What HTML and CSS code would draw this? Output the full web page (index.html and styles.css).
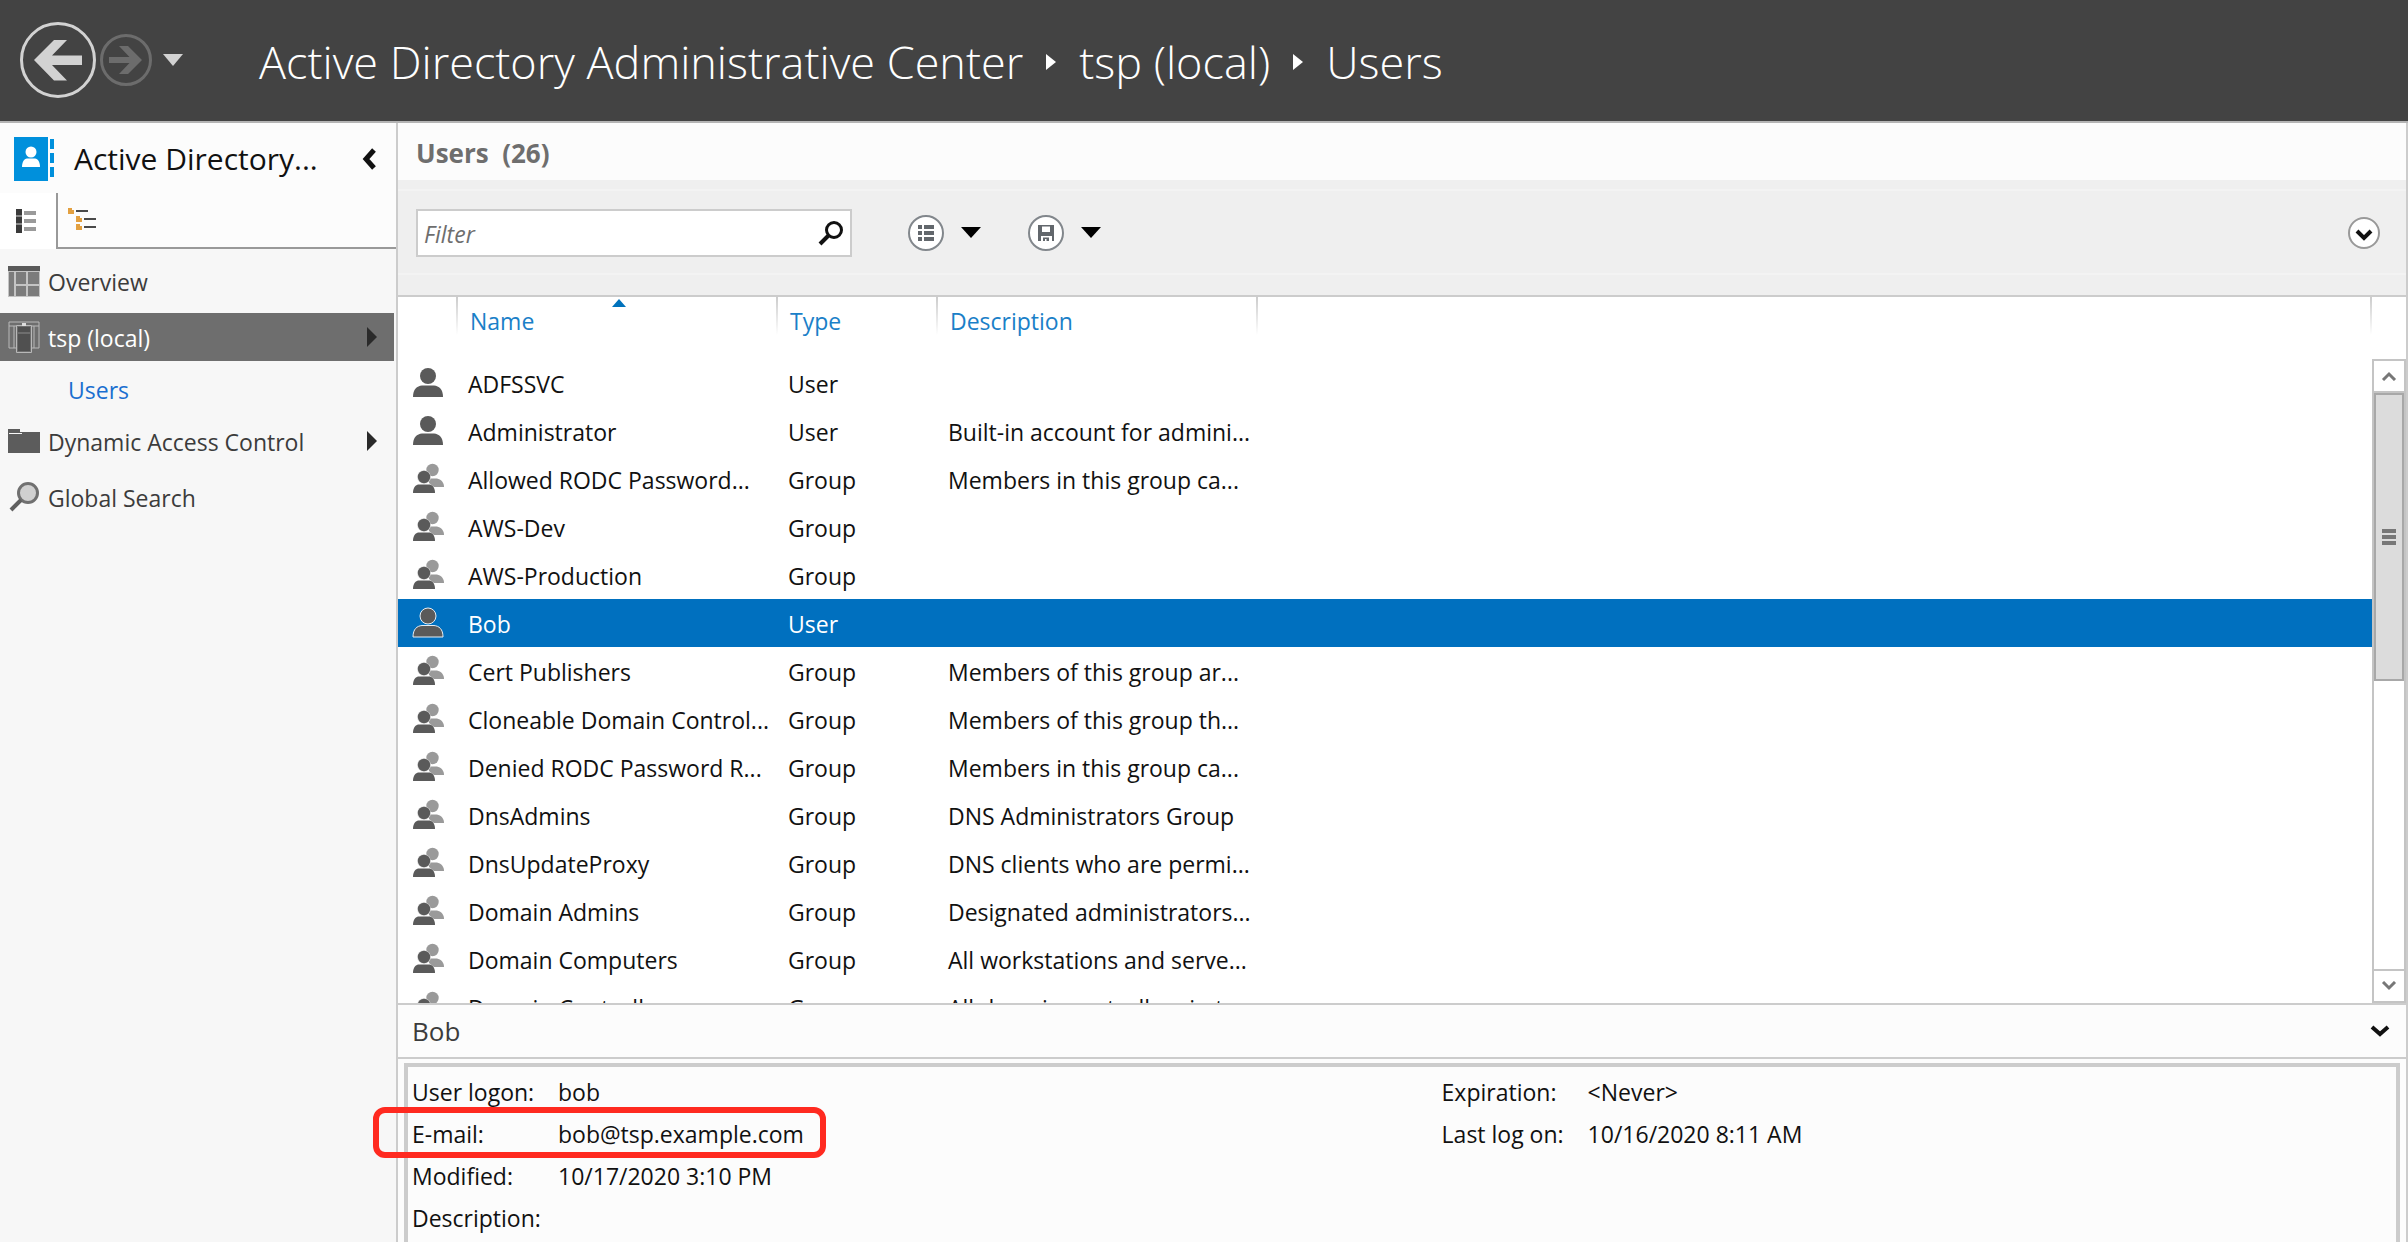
FILE: index.html
```html
<!DOCTYPE html>
<html lang="en">
<head>
<meta charset="utf-8">
<title>Active Directory Administrative Center</title>
<link rel="stylesheet" href="styles.css">
</head>
<body>
<svg class="sprite" aria-hidden="true">
  <symbol id="user" viewBox="0 0 32 32">
    <ellipse cx="16" cy="9" rx="8" ry="8"/>
    <path d="M1 30C1 22 5 19 10 18.500H22C27 19 31 22 31 30Z"/>
  </symbol>
  <symbol id="group" viewBox="0 0 32 32">
    <g fill="#9a9a9a"><circle cx="20.500" cy="7" r="6.200"/><path d="M17 15.500H25C29 16.500 32 19 32 24H22L17 20Z"/></g>
    <circle cx="12" cy="14" r="6.800" fill="#d8d8d8"/>
    <circle cx="12" cy="14" r="6.200"/>
    <path d="M1 30C1 25 3 22.500 6 21.500H18C21 22.500 23 25 23 30Z"/>
  </symbol>
</svg>

<header class="topbar">
  <button class="nav-btn" aria-label="Back">
    <svg width="76" height="76" viewBox="0 0 76 76"><circle cx="38" cy="38" r="36.500" fill="none" stroke="#d2d2d2" stroke-width="3"/><path d="M14 38L34 18H47L32 33.500H62V43H32L47 58.500H34Z" fill="#d2d2d2"/></svg>
  </button>
  <button class="nav-btn forward" aria-label="Forward" disabled>
    <svg width="52" height="52" viewBox="0 0 52 52"><circle cx="26" cy="26" r="24.500" fill="none" stroke="#6c6c6c" stroke-width="3"/><path d="M42 26L28 12H19L29.500 23H9V29H29.500L19 40H28Z" fill="#6c6c6c"/></svg>
  </button>
  <button class="nav-btn history" aria-label="History">
    <svg width="22" height="14" viewBox="0 0 22 14"><path d="M1 1H21L11 13Z" fill="#d2d2d2"/></svg>
  </button>
  <nav class="crumbs" aria-label="Breadcrumb">
    <a href="#">Active Directory Administrative Center</a>
    <svg width="10" height="16" viewBox="0 0 10 16"><path d="M0 0L10 8L0 16Z" fill="#fff"/></svg>
    <a href="#">tsp (local)</a>
    <svg width="10" height="16" viewBox="0 0 10 16"><path d="M0 0L10 8L0 16Z" fill="#fff"/></svg>
    <a href="#">Users</a>
  </nav>
</header>

<div class="body">
  <aside class="sidebar">
    <div class="side-head">
      <svg width="40" height="44" viewBox="0 0 40 44"><path fill="#0090dc" d="M0 0H34V44H0ZM36 2h4V12h-4ZM36 16h4V26h-4ZM36 30h4V40h-4Z"/><g fill="#fff"><circle cx="17" cy="15" r="5.500"/><path d="M8 30C8 25 10 22 13 21.500H21C24 22 26 25 26 30Z"/></g></svg>
      <h2>Active Directory...</h2>
      <button aria-label="Collapse pane"><svg width="14" height="22" viewBox="0 0 14 22"><path d="M12 2L4 11L12 20" fill="none" stroke="#111" stroke-width="5"/></svg></button>
    </div>
    <div class="tabs">
      <button class="tab active" aria-label="List view">
        <svg width="20" height="24" viewBox="0 0 20 24"><path fill="#3a3a3a" d="M0 0h6v24H0Z"/><path fill="#9a9a9a" d="M8 2h12v4H8ZM8 10h12v4H8ZM8 18h12v4H8Z"/><path fill="#8a8a8a" d="M0 6h6v2H0ZM0 14h6v2H0Z"/></svg>
      </button>
      <button class="tab" aria-label="Tree view">
        <svg width="28" height="24" viewBox="0 0 28 24"><path fill="#e3a040" d="M0 0h4v2h2v4H0ZM8 8h4v2h2v4H8ZM8 16h4v2h2v4H8Z"/><path fill="#4a4a4a" d="M8 2h12v2H8ZM16 10h12v2H16ZM16 18h12v2H16Z"/></svg>
      </button>
    </div>
    <nav class="tree" aria-label="Navigation">
      <a href="#" class="item">
        <svg width="32" height="32" viewBox="0 0 32 32"><path fill="#5a5a5a" d="M0 1h32v5H0Z"/><path fill="#c4c4c4" d="M0 6h32v26H0Z"/><path fill="#7c7c7c" d="M1 7h5v24H1ZM8 7h10v12H8ZM20 7h11v12H20ZM8 21h10v10H8ZM20 21h11v10H20Z"/></svg>
        <span>Overview</span>
      </a>
      <a href="#" class="item selected">
        <svg width="32" height="32" viewBox="0 0 32 32"><g fill="#6e6e6e" stroke="#b8b8b8"><path d="M1 1H31V27H1ZM1 5H31M6 5V27M26 5V27"/><path d="M8.500 4.500H23.500V31.500H8.500Z"/></g><path fill="#505050" d="M10 6h12v5H10ZM10 13h12v17H10Z"/><path fill="#ddd" d="M14 2h4v3h-4Z"/></svg>
        <span>tsp (local)</span>
        <svg class="arrow" width="12" height="20" viewBox="0 0 12 20"><path d="M1 0L11 10L1 20Z"/></svg>
      </a>
      <a href="#" class="item child"><span>Users</span></a>
      <a href="#" class="item">
        <svg width="32" height="24" viewBox="0 0 32 24"><path fill="#5c5c5c" d="M0 0H12V3H32V24H0Z"/><path stroke="#f7f7f7" stroke-width="1" d="M1 4.500H14"/></svg>
        <span>Dynamic Access Control</span>
        <svg class="arrow" width="12" height="20" viewBox="0 0 12 20"><path d="M1 0L11 10L1 20Z"/></svg>
      </a>
      <a href="#" class="item last">
        <svg width="32" height="32" viewBox="0 0 32 32"><circle cx="20" cy="12" r="9.500" fill="#d0d0d0" stroke="#707070" stroke-width="3"/><path d="M13 19L3 29" stroke="#606060" stroke-width="4"/></svg>
        <span>Global Search</span>
      </a>
    </nav>
  </aside>

  <main class="main">
    <h1>Users&nbsp; (26)</h1>
    <div class="toolbar">
      <div class="tools">
        <label class="filter">
          <input type="text" placeholder="Filter" aria-label="Filter">
          <svg width="26" height="26" viewBox="0 0 26 26"><circle cx="16" cy="10" r="7.500" fill="none" stroke="#111" stroke-width="3"/><path d="M11 15L2 24" stroke="#111" stroke-width="4"/></svg>
        </label>
        <button class="tool" aria-label="Saved queries">
          <svg width="36" height="36" viewBox="0 0 36 36"><circle cx="18" cy="18" r="17" fill="#fff" stroke="#82878c" stroke-width="2"/><path fill="#62676c" d="M10 10h4v4h-4ZM16 10h10v4H16ZM10 16h4v4h-4ZM16 16h10v4H16ZM10 22h4v4h-4ZM16 22h10v4H16Z"/></svg>
          <svg width="20" height="12" viewBox="0 0 20 12"><path d="M0 0H20L10 11Z"/></svg>
        </button>
        <button class="tool" aria-label="Save query">
          <svg width="36" height="36" viewBox="0 0 36 36"><circle cx="18" cy="18" r="17" fill="#fff" stroke="#82878c" stroke-width="2"/><path fill="#62676c" fill-rule="evenodd" d="M10 10H26V26H24V21H13V26H10ZM14 11.500V17H22V11.500ZM15 22.500H21V26H18.500V24H17V26H15Z"/></svg>
          <svg width="20" height="12" viewBox="0 0 20 12"><path d="M0 0H20L10 11Z"/></svg>
        </button>
        <button class="expand" aria-label="Expand criteria">
          <svg width="32" height="32" viewBox="0 0 32 32"><circle cx="16" cy="16" r="15" fill="#fff" stroke="#999" stroke-width="2"/><path d="M9 14L16 21L23 14" fill="none" stroke="#111" stroke-width="4"/></svg>
        </button>
      </div>
    </div>

    <div class="list">
      <div class="table-area">
        <table>
          <colgroup><col class="c-icon"><col class="c-name"><col class="c-type"><col class="c-desc"><col></colgroup>
          <thead>
            <tr><th></th><th>Name<svg class="sort" width="16" height="8" viewBox="0 0 16 8"><path d="M1 8L8 0L15 8Z" fill="#0072bc"/></svg></th><th>Type</th><th>Description</th><th></th></tr>
          </thead>
          <tbody>
            <tr><td><svg class="ico"><use href="#user"/></svg></td><td>ADFSSVC</td><td>User</td><td></td><td></td></tr>
            <tr><td><svg class="ico"><use href="#user"/></svg></td><td>Administrator</td><td>User</td><td>Built-in account for admini...</td><td></td></tr>
            <tr><td><svg class="ico"><use href="#group"/></svg></td><td>Allowed RODC Password...</td><td>Group</td><td>Members in this group ca...</td><td></td></tr>
            <tr><td><svg class="ico"><use href="#group"/></svg></td><td>AWS-Dev</td><td>Group</td><td></td><td></td></tr>
            <tr><td><svg class="ico"><use href="#group"/></svg></td><td>AWS-Production</td><td>Group</td><td></td><td></td></tr>
            <tr class="selected"><td><svg class="ico"><use href="#user"/></svg></td><td>Bob</td><td>User</td><td></td><td></td></tr>
            <tr><td><svg class="ico"><use href="#group"/></svg></td><td>Cert Publishers</td><td>Group</td><td>Members of this group ar...</td><td></td></tr>
            <tr><td><svg class="ico"><use href="#group"/></svg></td><td>Cloneable Domain Control...</td><td>Group</td><td>Members of this group th...</td><td></td></tr>
            <tr><td><svg class="ico"><use href="#group"/></svg></td><td>Denied RODC Password R...</td><td>Group</td><td>Members in this group ca...</td><td></td></tr>
            <tr><td><svg class="ico"><use href="#group"/></svg></td><td>DnsAdmins</td><td>Group</td><td>DNS Administrators Group</td><td></td></tr>
            <tr><td><svg class="ico"><use href="#group"/></svg></td><td>DnsUpdateProxy</td><td>Group</td><td>DNS clients who are permi...</td><td></td></tr>
            <tr><td><svg class="ico"><use href="#group"/></svg></td><td>Domain Admins</td><td>Group</td><td>Designated administrators...</td><td></td></tr>
            <tr><td><svg class="ico"><use href="#group"/></svg></td><td>Domain Computers</td><td>Group</td><td>All workstations and serve...</td><td></td></tr>
            <tr><td><svg class="ico"><use href="#group"/></svg></td><td>Domain Controllers</td><td>Group</td><td>All domain controllers in t...</td><td></td></tr>
          </tbody>
        </table>
      </div>
      <div class="scrollbar">
        <button aria-label="Scroll up"><svg width="16" height="10" viewBox="0 0 16 10"><path d="M2 9L8 3L14 9" fill="none" stroke="#777" stroke-width="3"/></svg></button>
        <div class="track"><div class="thumb"><i></i><i></i><i></i></div></div>
        <button aria-label="Scroll down"><svg width="16" height="10" viewBox="0 0 16 10"><path d="M2 1L8 7L14 1" fill="none" stroke="#777" stroke-width="3"/></svg></button>
      </div>
    </div>

    <section class="preview">
      <div class="preview-head">
        <h2>Bob</h2>
        <button aria-label="Collapse preview"><svg width="20" height="14" viewBox="0 0 20 14"><path d="M2 3L10 10L18 3" fill="none" stroke="#111" stroke-width="4"/></svg></button>
      </div>
      <div class="details">
        <dl>
          <div><dt>User logon:</dt><dd>bob</dd></div>
          <div class="marked"><dt>E-mail:</dt><dd>bob@tsp.example.com</dd></div>
          <div><dt>Modified:</dt><dd>10/17/2020 3:10 PM</dd></div>
          <div><dt>Description:</dt><dd></dd></div>
        </dl>
        <dl>
          <div><dt>Expiration:</dt><dd>&lt;Never&gt;</dd></div>
          <div><dt>Last log on:</dt><dd>10/16/2020 8:11 AM</dd></div>
        </dl>
      </div>
    </section>
  </main>
</div>
</body>
</html>
```
FILE: styles.css
```css
* { box-sizing: border-box; }

body {
  margin: 0;
  height: 100vh;
  overflow: hidden;
  display: flex;
  flex-direction: column;
  background: #fff;
  color: #111;
  font: 23px/32px "Open Sans", "Noto Sans", sans-serif;
}

.sprite { position: absolute; width: 0; height: 0; }
svg { display: block; flex: none; }
button { padding: 0; border: 0; background: none; font: inherit; color: inherit; }
a { color: inherit; text-decoration: none; }
h1, h2, dl, dd { margin: 0; }
h1, h2 { font-weight: 400; }

/* Top bar */
.topbar {
  flex: none;
  display: flex;
  align-items: center;
  height: 123px;
  padding: 0 20px 2px;
  background: #434343;
  border-bottom: 2px solid #b4b4b4;
}
.nav-btn.forward { margin-left: 4px; }
.nav-btn.history { margin-left: 10px; }
.crumbs {
  display: flex;
  align-items: center;
  gap: 23px;
  margin-left: 75px;
  padding-top: 4px;
  color: #fff;
  font-size: 45px;
  font-weight: 300;
  line-height: 60px;
  white-space: nowrap;
}

.body { flex: 1; min-height: 0; display: flex; }

/* Navigation pane */
.sidebar {
  flex: none;
  width: 398px;
  background: #f7f7f7;
  border-right: 2px solid #ccc;
}
.side-head {
  display: flex;
  align-items: center;
  height: 70px;
  padding: 2px 20px 0 14px;
  background: #fcfcfc;
}
.side-head h2 {
  flex: 1;
  margin-left: 20px;
  font-size: 30px;
  white-space: nowrap;
}
.tabs { display: flex; height: 56px; background: #fcfcfc; }
.tab { flex: 1; padding-left: 10px; border-bottom: 2px solid #999; }
.tab.active {
  flex: none;
  width: 58px;
  padding-left: 16px;
  background: #fff;
  border-right: 2px solid #999;
  border-bottom: 0;
}
.tree { padding: 8px 2px 0 0; color: #3c3c3c; }
.item {
  display: flex;
  align-items: center;
  gap: 8px;
  height: 48px;
  padding: 0 16px 0 8px;
  margin-bottom: 4px;
}
.item span { padding-top: 2px; }
.item.selected { margin-top: 8px; background: #6e6e6e; color: #fff; }
.item.child { padding-left: 68px; color: #1a6fd0; }
.item.last { margin-top: 8px; }
.arrow { margin-left: auto; fill: #2a2a2a; }

/* Main pane */
.main {
  flex: 1;
  min-width: 0;
  display: flex;
  flex-direction: column;
  border-right: 2px solid #ccc;
}
h1 {
  height: 57px;
  padding: 14px 18px 0;
  background: #fcfcfc;
  color: #6e6e6e;
  font-size: 26px;
  font-weight: 700;
}
.toolbar {
  padding: 9px 0 20px;
  background: #efefef;
  border-bottom: 2px solid #ccc;
}
.tools {
  display: flex;
  align-items: center;
  padding: 18px 26px 16px 18px;
  border-top: 2px solid #f3f3f3;
  border-bottom: 2px solid #f3f3f3;
}
.filter {
  display: flex;
  align-items: center;
  width: 436px;
  height: 48px;
  margin-right: 20px;
  padding: 0 6px;
  background: #fff;
  border: 2px solid #ccc;
}
.filter input {
  flex: 1;
  min-width: 0;
  padding: 2px 0 0;
  border: 0;
  outline: 0;
  background: none;
  font: inherit;
}
.filter input::placeholder { color: #6e6e6e; font-style: italic; }
.tool { display: flex; align-items: center; gap: 17px; margin-left: 36px; }
.tool + .tool { margin-left: 47px; }
.expand { margin-left: auto; }

/* Object list */
.list { flex: 1; min-height: 0; display: flex; }
.table-area { flex: 1; min-width: 0; overflow: hidden; }
table {
  width: 100%;
  table-layout: fixed;
  border-collapse: collapse;
  white-space: nowrap;
}
.c-icon { width: 60px; }
.c-name { width: 320px; }
.c-type { width: 160px; }
.c-desc { width: 320px; }
th {
  position: relative;
  height: 62px;
  padding: 8px 0 0 12px;
  background: linear-gradient(#ccc, #fff) right top / 2px 38px no-repeat;
  color: #1a80c8;
  font-weight: 400;
  text-align: left;
  vertical-align: top;
}
.sort { position: absolute; left: 153px; top: 2px; }
td { height: 48px; padding: 2px 0 0 10px; }
td:first-child { padding: 0 0 0 14px; }
.ico { width: 32px; height: 32px; fill: #5a5a5a; }
tr.selected { background: #0070bf; color: #fff; }
tr.selected .ico { stroke: #e6eef5; stroke-width: 1; }

.scrollbar {
  flex: none;
  display: flex;
  flex-direction: column;
  width: 34px;
  margin-top: 62px;
  border: 2px solid #c4c4c4;
}
.scrollbar button { display: grid; place-items: center; height: 30px; }
.track {
  flex: 1;
  border: solid #c4c4c4;
  border-width: 2px 0;
}
.thumb {
  display: flex;
  flex-direction: column;
  align-items: center;
  justify-content: center;
  gap: 2px;
  height: 50%;
  background: #dcdcdc;
  border: 2px solid #a8a8a8;
}
.thumb i { width: 14px; height: 4px; background: #777; }

/* Preview pane */
.preview {
  flex: none;
  padding-right: 6px;
  background: #fcfcfc;
  border-top: 2px solid #ccc;
}
.preview-head {
  display: flex;
  align-items: center;
  justify-content: space-between;
  height: 54px;
  margin-right: -6px;
  padding: 0 16px 0 14px;
  border-bottom: 2px solid #ccc;
}
.preview-head h2 { color: #3c3c3c; font-size: 26px; }
.details {
  display: grid;
  grid-template-columns: 52% 48%;
  margin: 4px 0 0 6px;
  padding: 4px 4px 3px;
  border: 4px solid #ccc;
  border-bottom: 0;
}
dl > div {
  position: relative;
  display: flex;
  align-items: center;
  width: 420px;
  height: 42px;
}
dt { width: 146px; }
.marked::after {
  content: "";
  position: absolute;
  inset: -6px 6px -3px -39px;
  border: 6px solid #ff2a20;
  border-radius: 12px;
}
```
